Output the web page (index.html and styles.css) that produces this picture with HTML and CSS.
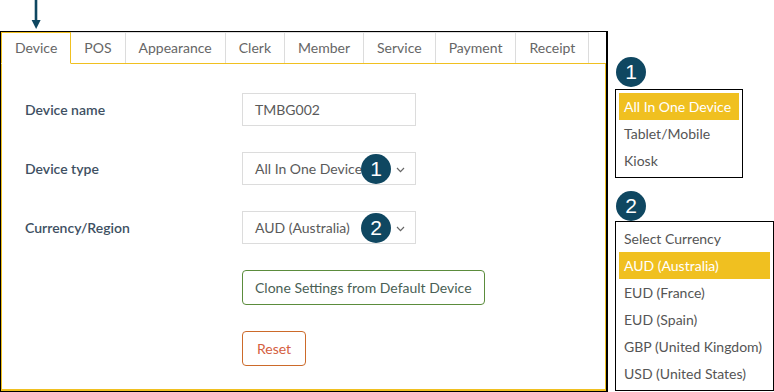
FILE: index.html
```html
<!DOCTYPE html>
<html lang="en">
<head>
    <meta charset="UTF-8">
    <title>Device settings</title>
    <link rel="stylesheet" href="styles.css">
</head>
<body>

<div class="page">

    <div class="main">
        <div class="pointer">
            <svg width="16" height="31" viewBox="0 0 16 31">
                <line x1="8" y1="0" x2="8" y2="22" stroke="#0f4761" stroke-width="2.6"/>
                <polygon points="3.6,20 12.6,20 8.1,29" fill="#0f4761"/>
            </svg>
        </div>

        <div class="frame">
            <ul class="tabs">
                <li class="tab active">Device</li>
                <li class="tab">POS</li>
                <li class="tab">Appearance</li>
                <li class="tab">Clerk</li>
                <li class="tab">Member</li>
                <li class="tab">Service</li>
                <li class="tab">Payment</li>
                <li class="tab">Receipt</li>
            </ul>

            <div class="panel">
                <div class="settings">
                    <div class="field-label">Device name</div>
                    <div class="control">TMBG002</div>

                    <div class="field-label">Device type</div>
                    <div class="control select">
                        <span>All In One Device</span>
                        <span class="badge badge-over">1</span>
                        <svg class="chevron" width="9" height="6" viewBox="0 0 9 6">
                            <polyline points="1,1 4.5,4.6 8,1" fill="none" stroke="#666" stroke-width="1.2"/>
                        </svg>
                    </div>

                    <div class="field-label">Currency/Region</div>
                    <div class="control select">
                        <span>AUD (Australia)</span>
                        <span class="badge badge-over">2</span>
                        <svg class="chevron" width="9" height="6" viewBox="0 0 9 6">
                            <polyline points="1,1 4.5,4.6 8,1" fill="none" stroke="#666" stroke-width="1.2"/>
                        </svg>
                    </div>

                    <div></div>
                    <div><button class="btn btn-clone">Clone Settings from Default Device</button></div>

                    <div></div>
                    <div><button class="btn btn-reset">Reset</button></div>
                </div>
            </div>
        </div>
    </div>

    <div class="side">
        <span class="badge">1</span>
        <ul class="options options-type">
            <li class="selected">All In One Device</li>
            <li>Tablet/Mobile</li>
            <li>Kiosk</li>
        </ul>

        <span class="badge badge-second">2</span>
        <ul class="options options-currency">
            <li>Select Currency</li>
            <li class="selected">AUD (Australia)</li>
            <li>EUD (France)</li>
            <li>EUD (Spain)</li>
            <li>GBP (United Kingdom)</li>
            <li>USD (United States)</li>
        </ul>
    </div>

</div>

</body>
</html>
```

FILE: styles.css
```css
html, body, div, span, ul, li, button {
    margin: 0;
    padding: 0;
    border: 0;
    font: inherit;
}

ul {
    list-style: none;
}

body {
    background: #fff;
    font-family: 'Lato', 'Liberation Sans', sans-serif;
    font-size: 14px;
    color: #555;
}

.page {
    display: flex;
    align-items: flex-start;
}

/* left: settings window */

.main {
    width: 608px;
}

.pointer {
    height: 31px;
    padding-left: 28px;
}

.pointer svg {
    display: block;
}

.frame {
    height: 361px;
    box-sizing: border-box;
    border: 1px solid #000;
    border-right-width: 2px;
    display: flex;
    flex-direction: column;
}

.tabs {
    display: flex;
    position: relative;
    z-index: 1;
}

.tab {
    height: 30px;
    line-height: 30px;
    padding: 0 13px;
    color: #666;
    border-top: 1px solid #dcdcdc;
    border-right: 1px solid #dcdcdc;
}

.tab.active {
    border: 1px solid #f0c020;
    border-bottom-color: #fff;
    margin-bottom: -1px;
}

.panel {
    flex: 1;
    border: 1px solid #f0c020;
    border-bottom-width: 2px;
    padding: 29px 0 0 23px;
}

.settings {
    display: grid;
    grid-template-columns: 217px 174px;
    row-gap: 26px;
    align-items: center;
}

.field-label {
    color: #3e5062;
    font-weight: 600;
}

.control {
    position: relative;
    height: 33px;
    box-sizing: border-box;
    border: 1px solid #dcdcdc;
    padding-left: 12px;
    line-height: 31px;
    color: #5a5a5a;
}

.select .chevron {
    position: absolute;
    right: 10px;
    top: 14px;
}

.btn {
    height: 35px;
    box-sizing: border-box;
    border-radius: 4px;
    background: #fff;
    padding: 0 14px;
    font-size: 14px;
    white-space: nowrap;
    cursor: pointer;
}

.btn-clone {
    padding: 0 12px;
    border: 1px solid #5b8c3c;
    color: #4a5f55;
}

.btn-reset {
    border: 1px solid #cc6a2a;
    color: #d4603f;
}

/* numbered markers */

.badge {
    display: block;
    width: 30px;
    height: 30px;
    border-radius: 50%;
    background: #0f4761;
    color: #fff;
    font-family: 'Liberation Sans', sans-serif;
    font-size: 21px;
    line-height: 30px;
    text-align: center;
}

.badge-over {
    position: absolute;
    left: 118px;
    top: 1px;
}

/* right: opened dropdowns */

.side {
    margin-left: 7px;
    padding-top: 57px;
}

.side .badge {
    margin: 0 0 2px 1px;
}

.side .badge-second {
    margin-top: 13px;
    margin-bottom: 0;
}

.options {
    box-sizing: border-box;
    border: 1px solid #000;
    padding: 3px;
}

.options li {
    height: 27px;
    line-height: 27px;
    padding-left: 5px;
    white-space: nowrap;
}

.options .selected {
    background: #f0c020;
    color: #fff;
}

.options-type {
    width: 128px;
}

.options-currency {
    width: 159px;
}
```
